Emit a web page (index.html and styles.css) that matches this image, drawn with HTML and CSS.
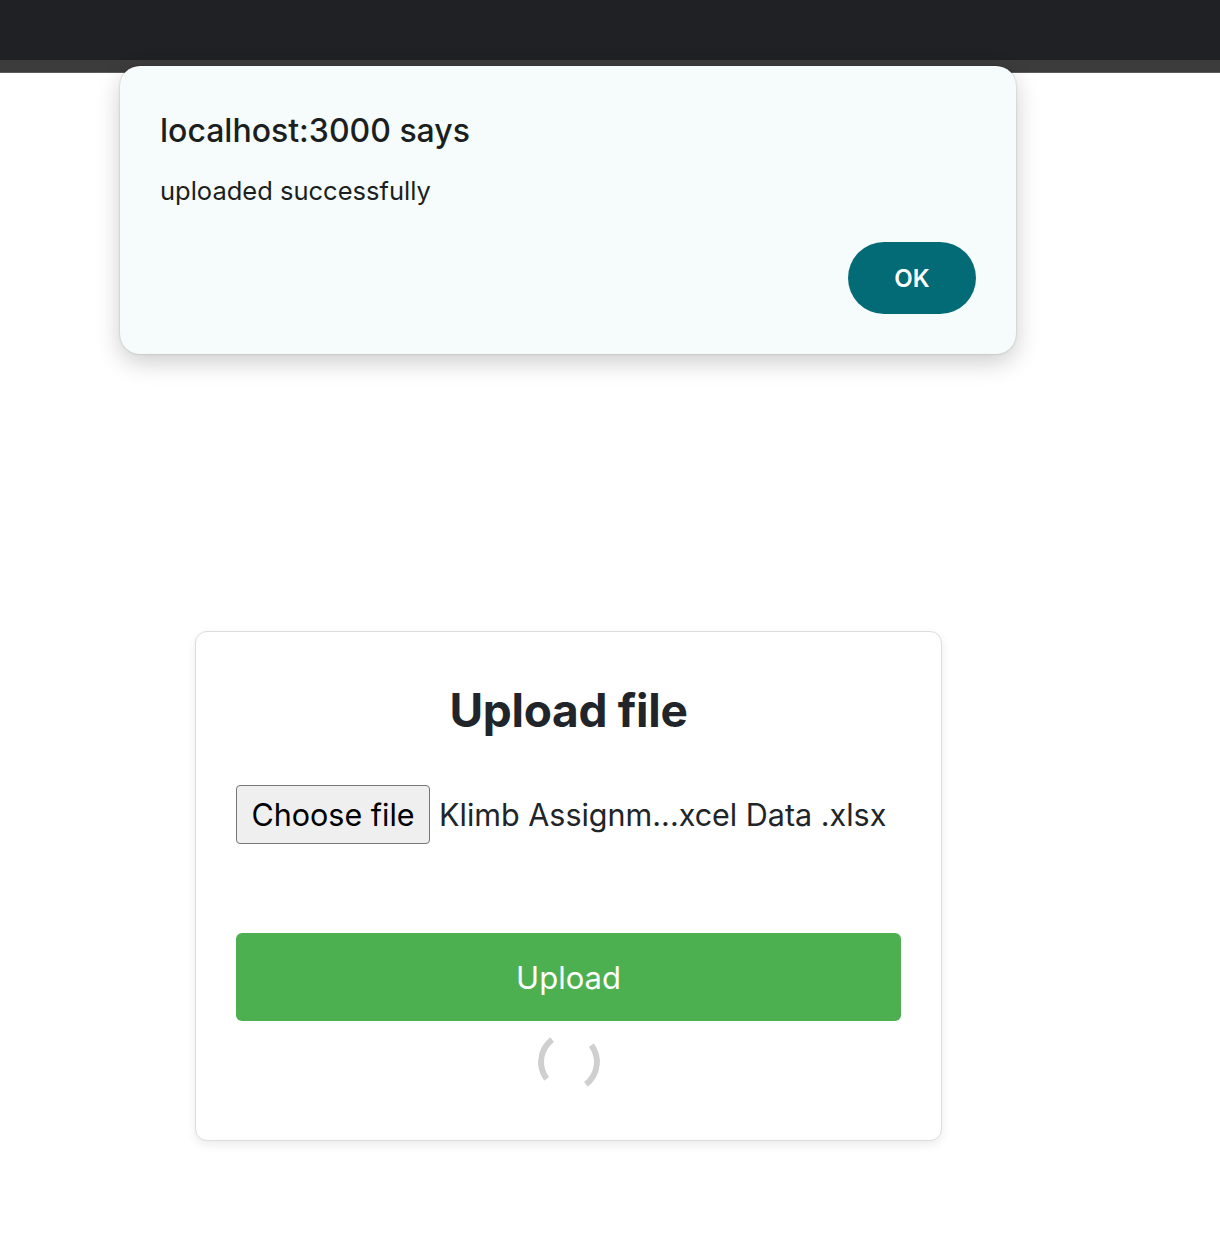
FILE: index.html
```html
<!DOCTYPE html>
<html>
<head>
<meta charset="utf-8">
<link rel="stylesheet" href="styles.css">
</head>
<body>
<div class="chrome">
  <div class="chrome-top"></div>
  <div class="chrome-strip"></div>
</div>
<main class="page">
  <section class="card">
    <h1 class="card-title">Upload file</h1>
    <div class="file-row">
      <span class="file-btn">Choose file</span>
      <span class="file-name">Klimb Assignm...xcel Data .xlsx</span>
    </div>
    <button class="upload-btn">Upload</button>
    <div class="spinner-wrap"><div class="spinner"></div></div>
  </section>
</main>
<div class="dialog">
  <div class="dialog-title">localhost:3000 says</div>
  <div class="dialog-msg">uploaded successfully</div>
  <div class="dialog-actions"><button class="ok-btn">OK</button></div>
</div>
</body>
</html>
```
FILE: styles.css
```css
* { box-sizing: border-box; }
html, body { margin: 0; padding: 0; background: #fff; }
body { font-family: Inter, "Noto Sans", sans-serif; color: #212529; width: 1220px; height: 1246px; position: relative; overflow: hidden; }

.chrome-top { height: 60px; background: #202124; }
.chrome-strip { height: 13px; background: #3c3c3c; border-bottom: 1px solid #5c5c5c; }

.page { padding-left: 195px; padding-top: 558px; }

.card {
  width: 747px;
  height: 510px;
  border: 1px solid #dcdcdc;
  border-radius: 12px;
  background: #fff;
  box-shadow: 0 4px 10px rgba(0,0,0,0.08);
  padding: 46px 40px 0 40px;
}
.card-title {
  margin: 0;
  text-align: center;
  font-size: 46px;
  font-weight: 700;
  line-height: 64px;
  letter-spacing: -0.3px;
  color: #212529;
}
.file-row {
  margin-top: 43px;
  display: flex;
  align-items: center;
  height: 59px;
}
.file-btn {
  display: inline-flex;
  align-items: center;
  justify-content: center;
  width: 194px;
  height: 59px;
  background: #efefef;
  border: 1.5px solid #767676;
  border-radius: 4px;
  font-size: 30.5px;
  color: #000;
}
.file-name {
  margin-left: 9px;
  font-size: 30.5px;
  color: #212529;
  white-space: nowrap;
}
.upload-btn {
  display: block;
  margin-top: 89px;
  width: 665px;
  height: 88px;
  border: 0;
  border-radius: 6px;
  background: #4caf50;
  color: #fff;
  font-family: Inter, "Noto Sans", sans-serif;
  font-size: 31px;
  font-weight: 400;
}
.spinner-wrap { display: flex; justify-content: center; margin-top: 10px; }
.spinner {
  width: 62px;
  height: 62px;
  border-radius: 50%;
  border: 6.5px solid transparent;
  border-left-color: #cfcfcf;
  border-right-color: #cfcfcf;
  transform: rotate(8deg);
}

.dialog {
  position: absolute;
  left: 120px;
  top: 66px;
  width: 896px;
  height: 288px;
  background: #f6fcfc;
  border-radius: 20px;
  box-shadow: 0 8px 24px rgba(0,0,0,0.2), 0 0 2px rgba(0,0,0,0.25);
  padding: 44px 40px 40px 40px;
  display: flex;
  flex-direction: column;
}
.dialog-title {
  font-size: 32px;
  font-weight: 500;
  line-height: 42px;
  color: #1b1f20;
}
.dialog-msg {
  margin-top: 23px;
  font-size: 25.5px;
  line-height: 32px;
  color: #1b1f20;
}
.dialog-actions { margin-top: auto; display: flex; justify-content: flex-end; }
.ok-btn {
  width: 128px;
  height: 72px;
  border: 0;
  border-radius: 36px;
  background: #026b75;
  color: #fff;
  font-family: Inter, "Noto Sans", sans-serif;
  font-size: 24px;
  font-weight: 600;
}
```
